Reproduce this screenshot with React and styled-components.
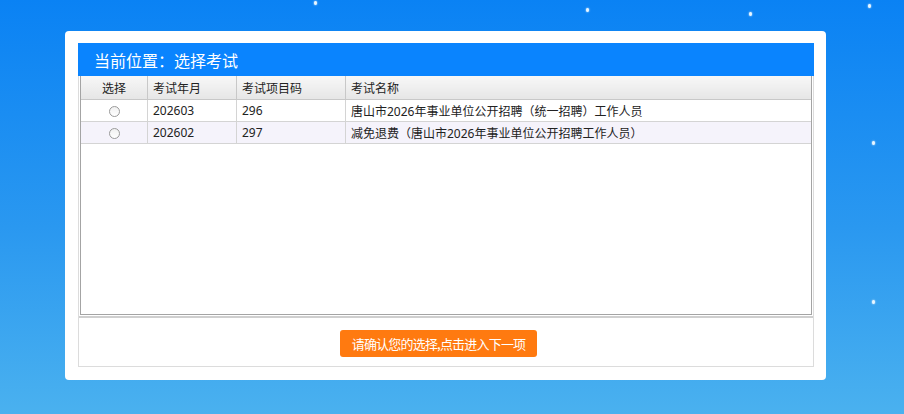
import React from 'react';
import styled, { createGlobalStyle } from 'styled-components';

const GlobalStyle = createGlobalStyle`
  html, body {
    margin: 0;
    padding: 0;
  }
  body {
    font-family: "Noto Sans", "Noto Sans CJK SC", sans-serif;
  }
`;

const Page = styled.div`
  position: relative;
  width: 904px;
  height: 414px;
  overflow: hidden;
  background: linear-gradient(180deg, #0a82f4 0%, #2a98f0 55%, #4ab1ef 100%);
  padding-top: 31px;
  box-sizing: border-box;
`;

const Snow = styled.span`
  position: absolute;
  width: 3px;
  height: 4px;
  border-radius: 50%;
  background: #e8f6ff;
  box-shadow: 0 0 2px #ffffff;
`;

const Card = styled.div`
  width: 761px;
  margin-left: 65px;
  background: #fff;
  border-radius: 4px;
  padding: 12px 12px 13px 13px;
  box-sizing: border-box;
`;

const TitleBar = styled.div`
  height: 33px;
  background: #0a84fe;
  color: #fff;
  font-family: "Noto Sans CJK SC", sans-serif;
  font-size: 16px;
  display: flex;
  align-items: center;
  padding-left: 16px;
`;

const Body = styled.div`
  border: 1px solid #dcdcdc;
  border-top: none;
`;

const GridBox = styled.div`
  margin: 0 1px;
  height: 238px;
  border: 1px solid #a4a4a4;
  border-top: none;
  background: #fff;
`;

const Table = styled.table`
  width: 100%;
  border-collapse: collapse;
  font-family: "Noto Sans", "Noto Sans CJK SC", sans-serif;
  font-size: 12px;
  color: #222;
`;

const Th = styled.th`
  height: 23px;
  padding: 0 5px;
  font-weight: normal;
  text-align: ${p => (p.$center ? 'center' : 'left')};
  background: linear-gradient(180deg, #f7f7f7 0%, #e6e6e6 100%);
  border-right: 1px solid #c8c8c8;
  border-bottom: 1px solid #c8c8c8;
  width: ${p => p.$w || 'auto'};
  &:last-child { border-right: none; }
`;

const Tr = styled.tr`
  background: ${p => (p.$alt ? '#f5f3fb' : '#fff')};
`;

const Td = styled.td`
  height: 21px;
  padding: 0 5px;
  text-align: ${p => (p.$center ? 'center' : 'left')};
  border-right: 1px solid #d4d4d4;
  border-bottom: 1px solid #d4d4d4;
  &:last-child { border-right: none; }
`;

const Radio = styled.span`
  display: inline-block;
  width: 9px;
  height: 9px;
  border: 1px solid #9a9a9a;
  border-radius: 50%;
  background: linear-gradient(180deg, #f0f0f0, #fff);
  vertical-align: middle;
`;

const Divider = styled.div`
  height: 2px;
  margin-top: 1px;
  background: #cfcfcf;
`;

const Footer = styled.div`
  height: 48px;
  display: flex;
  justify-content: center;
  align-items: flex-start;
  padding: 12px 15px 0 0;
  box-sizing: border-box;
`;

const NextButton = styled.button`
  width: 197px;
  height: 27px;
  border: none;
  border-radius: 3px;
  background: #ff7a10;
  color: #fff;
  font-family: "Noto Sans CJK SC", sans-serif;
  font-size: 13px;
  letter-spacing: -0.8px;
  padding: 0;
  cursor: pointer;
`;

const rows = [
  { ym: '202603', code: '296', name: '唐山市2026年事业单位公开招聘（统一招聘）工作人员' },
  { ym: '202602', code: '297', name: '减免退费（唐山市2026年事业单位公开招聘工作人员）' },
];

const snow = [
  [314, 1], [586, 8], [749, 12], [868, 4], [872, 141], [872, 300],
];

export default function App() {
  return (
    <Page>
      <GlobalStyle />
      {snow.map(([x, y], i) => (
        <Snow key={i} style={{ left: x, top: y }} />
      ))}
      <Card>
        <TitleBar>当前位置：选择考试</TitleBar>
        <Body>
          <GridBox>
            <Table>
              <thead>
                <tr>
                  <Th $center $w="56px">选择</Th>
                  <Th $w="78px">考试年月</Th>
                  <Th $w="98px">考试项目码</Th>
                  <Th>考试名称</Th>
                </tr>
              </thead>
              <tbody>
                {rows.map((r, i) => (
                  <Tr key={r.code} $alt={i % 2 === 1}>
                    <Td $center><Radio /></Td>
                    <Td>{r.ym}</Td>
                    <Td>{r.code}</Td>
                    <Td>{r.name}</Td>
                  </Tr>
                ))}
              </tbody>
            </Table>
          </GridBox>
          <Divider />
          <Footer>
            <NextButton>请确认您的选择,点击进入下一项</NextButton>
          </Footer>
        </Body>
      </Card>
    </Page>
  );
}
